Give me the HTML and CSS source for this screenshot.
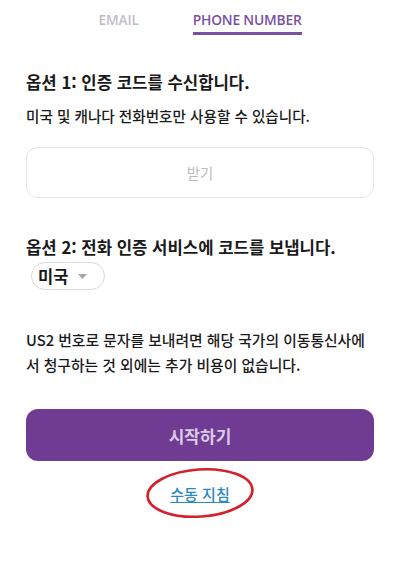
FILE: index.html
```html
<!DOCTYPE html>
<html lang="ko">
<head>
<meta charset="utf-8">
<link rel="stylesheet" href="styles.css">
</head>
<body>
<div class="page">
  <nav class="tabs">
    <span class="tab">EMAIL</span>
    <span class="tab active">PHONE NUMBER</span>
  </nav>
  <main class="content">
    <h2 class="heading h1">옵션 1: 인증 코드를 수신합니다.</h2>
    <p class="sub">미국 및 캐나다 전화번호만 사용할 수 있습니다.</p>
    <div class="input">받기</div>
    <h2 class="heading h2">옵션 2: 전화 인증 서비스에 코드를 보냅니다.</h2>
    <div class="select">
      <span class="select-label">미국</span>
      <svg class="caret" width="9" height="5" viewBox="0 0 9 5"><path d="M0 0 L9 0 L4.5 5 Z" fill="#a5a5a5"/></svg>
    </div>
    <p class="para">US2 번호로 문자를 보내려면 해당 국가의 이동통신사에서 청구하는 것 외에는 추가 비용이 없습니다.</p>
    <button class="start">시작하기</button>
    <div class="link-row">
      <span class="link-wrap">
        <a class="link">수동 지침</a>
        <svg class="circle" width="111" height="54" viewBox="0 0 111 54"><ellipse cx="55.5" cy="27" rx="52.5" ry="23.5" fill="none" stroke="#d2212b" stroke-width="2.6" transform="rotate(-4 55.5 27)"/></svg>
      </span>
    </div>
  </main>
</div>
</body>
</html>
```
FILE: styles.css
```css
* { box-sizing: border-box; }
html, body { margin: 0; padding: 0; background: #fff; }
body { font-family: "Noto Sans CJK KR", "Noto Sans", sans-serif; color: #1a1a1a; }
.page { width: 400px; height: 571px; overflow: hidden; }
.tabs {
  display: flex;
  justify-content: center;
  gap: 54px;
  padding-top: 10px;
  padding-left: 0;
}
.tab {
  font-family: "Open Sans", "Liberation Sans", sans-serif;
  font-size: 13.8px;
  font-weight: 600;
  line-height: 20px;
  color: #c4bcca;
  padding-bottom: 2px;
  border-bottom: 3px solid transparent;
  letter-spacing: -0.2px;
}
.tab.active { color: #7a50a2; border-bottom-color: #7a50a2; }
.content { padding: 0 26px; }
.heading {
  margin: 0;
  font-size: 16.7px;
  font-weight: 700;
  line-height: 24px;
  color: #1a1a1a;
}
.h1 { margin-top: 35px; }
.sub { margin: 12px 0 0; font-size: 14.6px; font-weight: 500; line-height: 20px; color: #1a1a1a; }
.input {
  margin-top: 21px;
  height: 51px;
  border: 1px solid #e6e6e6;
  border-radius: 11px;
  display: flex;
  align-items: center;
  justify-content: center;
  font-size: 14.5px;
  color: #bdbdbd;
}
.h2 { margin-top: 37px; }
.select {
  margin: 3px 0 0 5px;
  width: 74px;
  height: 28px;
  border: 1px solid #d9d9d9;
  border-radius: 14px;
  display: flex;
  align-items: center;
  padding-left: 6px;
  gap: 10px;
}
.select-label { font-size: 16.5px; font-weight: 700; line-height: 20px; color: #1a1a1a; }
.caret { margin-top: 1px; }
.para { margin: 37px 0 0; font-size: 14.8px; font-weight: 500; line-height: 25px; color: #1a1a1a; }
.start {
  display: block;
  width: 100%;
  margin-top: 32px;
  height: 52px;
  border: none;
  border-radius: 12px;
  background: #703c93;
  color: #dacbe5;
  font-family: "Noto Sans CJK KR", sans-serif;
  font-size: 17px;
  font-weight: 700;
}
.link-row { margin-top: 20px; display: flex; justify-content: center; }
.link-wrap { position: relative; display: inline-block; }
.link {
  font-size: 15px;
  font-weight: 500;
  line-height: 22px;
  color: #2b89c2;
  text-decoration: underline;
  text-underline-offset: 2px;
}
.circle {
  position: absolute;
  left: 50%;
  top: 50%;
  transform: translate(-50%, -50%);
  pointer-events: none;
}
```
